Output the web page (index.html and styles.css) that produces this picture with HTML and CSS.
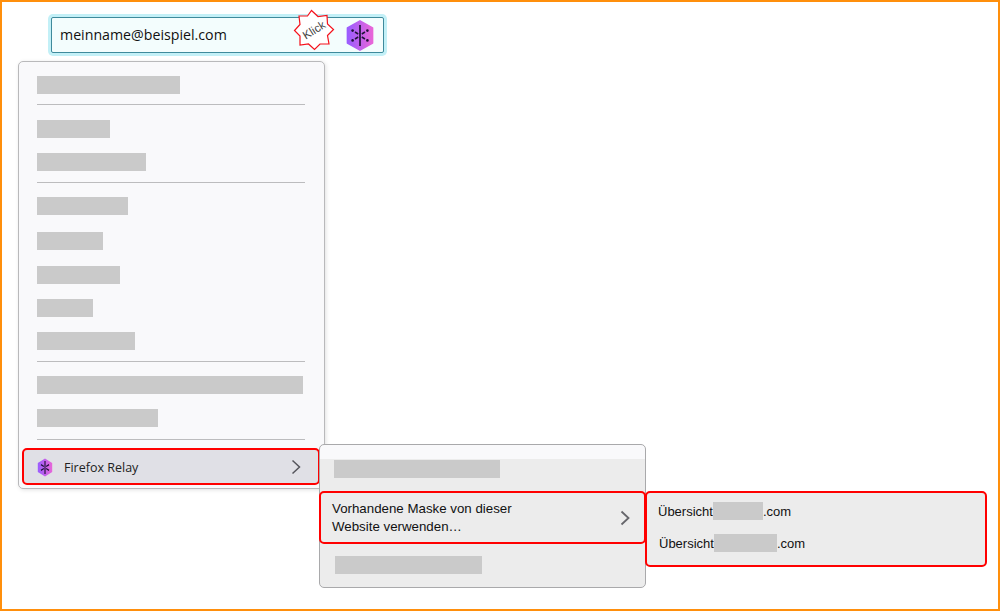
FILE: index.html
```html
<!DOCTYPE html>
<html lang="de">
<head>
    <meta charset="UTF-8">
    <meta name="viewport" content="width=device-width, initial-scale=1.0">
    <title>Firefox Relay</title>
    <link rel="stylesheet" href="styles.css">
</head>
<body>
    <div class="frame">
        <div class="field">
            <span class="field-text">meinname@beispiel.com</span>
            <div class="burst">
                <svg width="44" height="44" viewBox="0 0 44 44">
                    <polygon points="19.5,2.5 26,8.5 35,7.5 35.5,16 41.5,21.5 35.5,27.5 37,36 28,36 22.5,41.5 16.5,36 8,37 8,28 2.5,22.5 8,16.5 7,8 15.5,8" fill="#fff" stroke="#f5121c" stroke-width="1.2"/>
                </svg>
                <span class="burst-text">Klick</span>
            </div>
            <svg class="relay-icon" width="28" height="31" viewBox="0 0 28 31">
                <defs>
                    <linearGradient id="hexa" x1="0" y1="0" x2="1" y2="0">
                        <stop offset="0" stop-color="#9a5cff"/>
                        <stop offset="1" stop-color="#e866d8"/>
                    </linearGradient>
                </defs>
                <path d="M14 .8 26.6 8v15L14 30.2 1.4 23V8Z" fill="url(#hexa)" stroke="url(#hexa)" stroke-linejoin="round" stroke-width="1.5"/>
                <path d="M14 5v21" stroke="#20123a" stroke-width="1.7"/>
                <path d="M12.2 14 9 12M12.2 17 9 19M15.8 14 19 12M15.8 17 19 19" stroke="#20123a" stroke-width="1.5"/>
                <g fill="#20123a">
                    <circle cx="6.6" cy="10.6" r="1.3"/><circle cx="6.6" cy="20.4" r="1.3"/>
                    <circle cx="21.4" cy="10.6" r="1.3"/><circle cx="21.4" cy="20.4" r="1.3"/>
                </g>
            </svg>
        </div>

        <div class="menu">
            <div class="blur w143"></div>
            <hr class="sep">
            <div class="blur w73"></div>
            <div class="blur w109 tight"></div>
            <hr class="sep low">
            <div class="blur w91"></div>
            <div class="blur w66 loose"></div>
            <div class="blur w83"></div>
            <div class="blur w56 tight"></div>
            <div class="blur w98 tight"></div>
            <hr class="sep low">
            <div class="blur w266"></div>
            <div class="blur w121 tight"></div>
            <hr class="sep lower">
            <div class="relay-row">
                <svg width="16" height="19" viewBox="0 0 28 31" preserveAspectRatio="none">
                    <path d="M14 .8 26.6 8v15L14 30.2 1.4 23V8Z" fill="url(#hexa)"/>
                    <path d="M14 5v21" stroke="#20123a" stroke-width="2"/>
                    <path d="M12 14 7 10.8M12 17l-5 3.2M16 14l5-3.2M16 17l5 3.2" stroke="#20123a" stroke-width="2"/>
                </svg>
                <span class="relay-label">Firefox Relay</span>
                <svg class="chevron" width="10" height="16" viewBox="0 0 10 16">
                    <path d="M1.5 1.5 8.5 8l-7 6.5" fill="none" stroke="#55555c" stroke-width="1.5"/>
                </svg>
            </div>
        </div>

        <div class="submenu">
            <div class="sub-top">
                <div class="blur w166"></div>
            </div>
            <div class="mask-row">
                <span class="sub-text">Vorhandene Maske von dieser<br>Website verwenden…</span>
                <svg class="chevron" width="10" height="16" viewBox="0 0 10 16">
                    <path d="M1.5 1.5 8.5 8l-7 6.5" fill="none" stroke="#66666b" stroke-width="1.8"/>
                </svg>
            </div>
            <div class="sub-bottom">
                <div class="blur w147"></div>
            </div>
        </div>

        <div class="sites">
            <div class="site-row">Übersicht<span class="blur inline w50"></span>.com</div>
            <div class="site-row second">Übersicht<span class="blur inline w63"></span>.com</div>
        </div>
    </div>
</body>
</html>
```

FILE: styles.css
```css
* {
    box-sizing: border-box;
}
body {
    margin: 0;
    background: #fff;
}
.frame {
    position: relative;
    width: 1000px;
    height: 611px;
    border: 2px solid #ff8f0c;
    padding: 15px 0 0 16px;
}

/* eingabefeld oben */
.field {
    position: relative;
    display: flex;
    align-items: center;
    width: 333px;
    height: 36px;
    margin-left: 33px;
    padding: 0 9px 0 8px;
    background: #f3fdfd;
    border: 1px solid #3f8a9c;
    border-radius: 2px;
    box-shadow: 0 0 0 3px #c3f0f7;
}
.field-text {
    margin-top: -2px;
    font-family: "Open Sans", sans-serif;
    font-size: 14.2px;
    color: #111;
}
.relay-icon {
    margin-left: auto;
}
.burst {
    position: absolute;
    left: 240px;
    top: -10px;
    width: 44px;
    height: 44px;
}
.burst-text {
    position: absolute;
    left: 0;
    top: 0;
    width: 44px;
    line-height: 44px;
    text-align: center;
    font-family: "Liberation Sans", sans-serif;
    font-size: 11.5px;
    color: #444;
    transform: rotate(-32deg);
}

/* menues */
.menu {
    width: 307px;
    height: 428px;
    margin-top: 8px;
    padding: 14px 4px 0 18px;
    background: #f9f9fb;
    border: 1px solid #b9b9bb;
    border-radius: 5px;
    box-shadow: 1px 1px 4px rgba(0, 0, 0, .12);
}
.blur {
    height: 18px;
    margin-bottom: 16px;
    background: #cacaca;
}
.blur.tight {
    margin-top: -1px;
}
.blur.loose {
    margin-top: 17px;
}
.blur.inline {
    display: inline-block;
    height: 18px;
    margin: 0;
    vertical-align: middle;
}
.w143 { width: 143px; }
.w73 { width: 73px; }
.w109 { width: 109px; }
.w91 { width: 91px; }
.w66 { width: 66px; }
.w83 { width: 83px; }
.w56 { width: 56px; }
.w98 { width: 98px; }
.w266 { width: 266px; }
.w121 { width: 121px; }
.w166 { width: 166px; }
.w147 { width: 147px; }
.w50 { width: 50px; }
.w63 { width: 63px; }

.sep {
    width: 268px;
    height: 1px;
    margin: -6px 0 15px;
    border: 0;
    background: #bcbcbe;
}
.sep.low {
    margin: -5px 0 14px;
}
.sep.lower {
    margin: -4px 0 13px;
}
.relay-row {
    display: flex;
    align-items: center;
    width: 298px;
    height: 37px;
    margin: -5px 0 0 -15px;
    padding: 1px 17px 0 13px;
    background: #e0e0e6;
    border: 2px solid #ff0000;
    border-radius: 5px;
}
.relay-label {
    margin-left: 11px;
    font-family: "Open Sans", sans-serif;
    font-size: 12.5px;
    color: #222;
}
.chevron {
    margin-left: auto;
}

.submenu {
    position: absolute;
    left: 317px;
    top: 442px;
    width: 327px;
    height: 144px;
    padding-top: 14px;
    background: linear-gradient(#f9f9fb 14px, #ececec 14px);
    border: 1px solid #a9a9ab;
    border-radius: 5px;
}
.sub-top {
    height: 32px;
    padding: 1px 0 0 14px;
}
.sub-bottom {
    padding: 12px 0 0 15px;
}
.mask-row {
    display: flex;
    align-items: center;
    width: 327px;
    height: 53px;
    margin-left: -1px;
    padding: 0 14px 0 11px;
    border: 2px solid #ff0000;
    border-radius: 5px;
}
.sub-text {
    font-family: "Liberation Sans", sans-serif;
    font-size: 13.3px;
    line-height: 18px;
    color: #111;
}
.sites {
    position: absolute;
    left: 643px;
    top: 489px;
    width: 342px;
    height: 76px;
    padding: 8px 0 0 11px;
    background: #ececec;
    border: 2px solid #ff0000;
    border-radius: 5px;
    font-family: "Liberation Sans", sans-serif;
    font-size: 13px;
    color: #111;
}
.site-row {
    display: flex;
    align-items: center;
    height: 20px;
}
.site-row.second {
    margin: 12px 0 0 1px;
}
```
